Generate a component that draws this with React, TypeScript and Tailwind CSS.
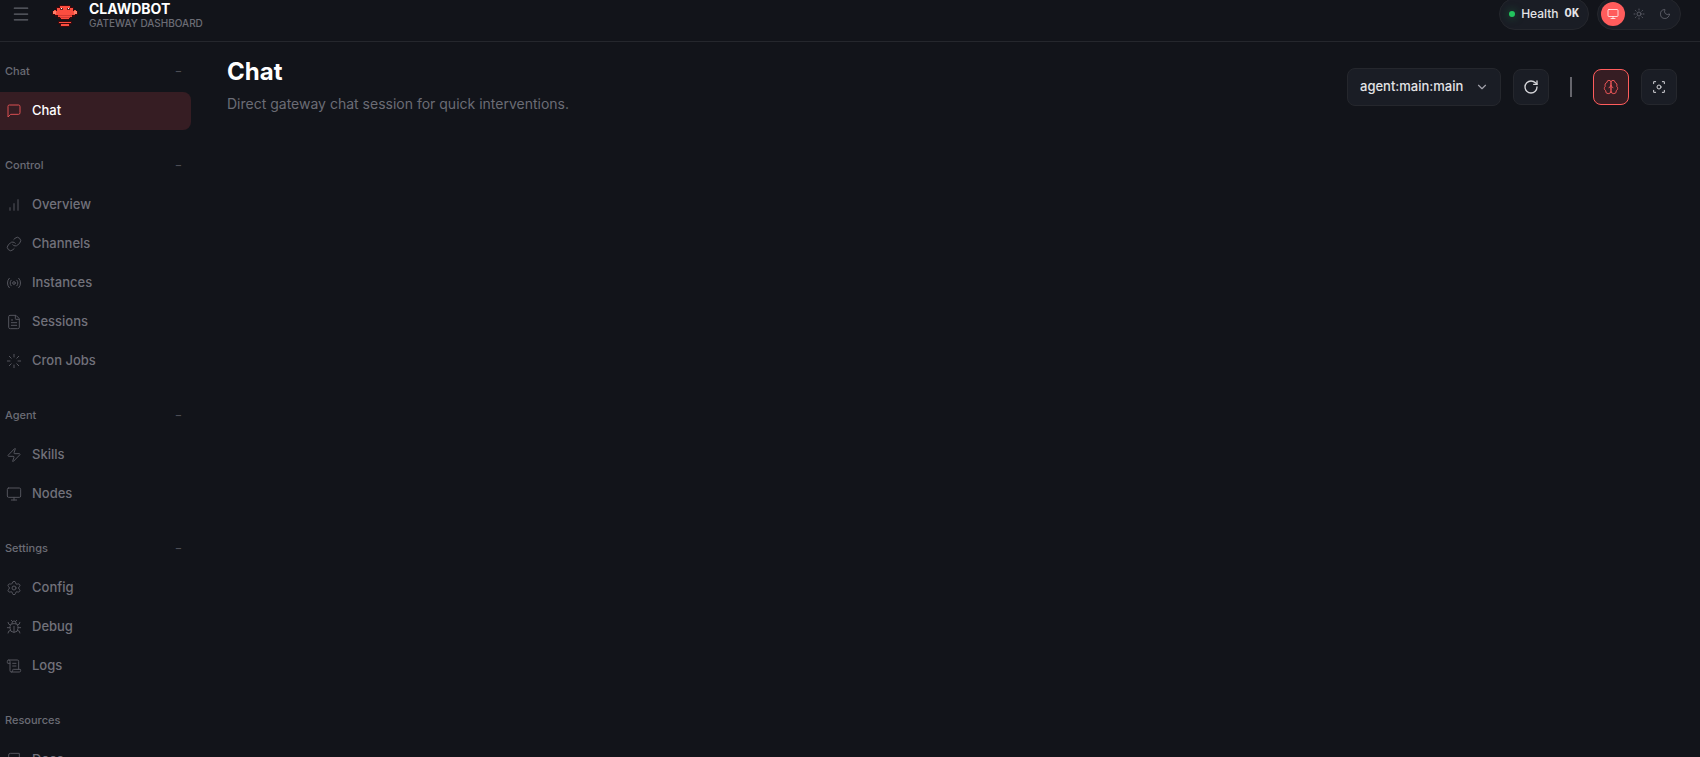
import React from 'react';
import {
	Bug,
	ChevronDown,
	FileText,
	Link,
	Loader,
	Menu,
	Monitor,
	Moon,
	Radio,
	RotateCw,
	ScrollText,
	Settings,
	Sun,
	Zap,
} from 'lucide-react';

const Icon = ({
	className,
	children,
}: {
	className?: string;
	children: React.ReactNode;
}) => (
	<svg
		className={className}
		viewBox="0 0 24 24"
		fill="none"
		stroke="currentColor"
		strokeWidth="1.5"
		strokeLinecap="round"
		strokeLinejoin="round"
	>
		{children}
	</svg>
);

const ChatIcon = ({ className }: { className?: string }) => (
	<Icon className={className}>
		<path d="M21 15a2 2 0 0 1-2 2H7l-4 4V5a2 2 0 0 1 2-2h14a2 2 0 0 1 2 2z" />
	</Icon>
);

const ChartIcon = ({ className }: { className?: string }) => (
	<Icon className={className}>
		<path d="M12 20V10" />
		<path d="M18 20V4" />
		<path d="M6 20v-4" />
	</Icon>
);

const BookIcon = ({ className }: { className?: string }) => (
	<Icon className={className}>
		<path d="M4 19.5v-15A2.5 2.5 0 0 1 6.5 2H20v20H6.5a2.5 2.5 0 0 1 0-5H20" />
	</Icon>
);

const BrainIcon = ({ className }: { className?: string }) => (
	<Icon className={className}>
		<path d="M12 5a3 3 0 1 0-5.997.125 4 4 0 0 0-2.526 5.77 4 4 0 0 0 .556 6.588A4 4 0 1 0 12 18Z" />
		<path d="M12 5a3 3 0 1 1 5.997.125 4 4 0 0 1 2.526 5.77 4 4 0 0 1-.556 6.588A4 4 0 1 1 12 18Z" />
		<path d="M15 13a4.5 4.5 0 0 1-3-4 4.5 4.5 0 0 1-3 4" />
	</Icon>
);

const FocusIcon = ({ className }: { className?: string }) => (
	<Icon className={className}>
		<path d="M4 7V4h3" />
		<path d="M20 7V4h-3" />
		<path d="M4 17v3h3" />
		<path d="M20 17v3h-3" />
		<circle cx="12" cy="12" r="3" />
	</Icon>
);

const Logo = () => (
	<svg className="h-7 w-7" viewBox="0 0 28 28" shapeRendering="crispEdges">
		<path
			fill="#3a0a0d"
			d="M8 5h12v2h3v3h2v1h2v4h-3v2h-3v2h-3v1h-8v-1H7v-2H4v-2H1v-4h2v-1h2V7h3zM7 21h14v3h-2v3H9v-3H7z"
		/>
		<path
			fill="#fb4d3f"
			d="M9 6h10v2h3v3h1v-1h2v1h1v3h-2v1h-3v2h-3v2h-8v-2H7v-2H4v-1H2v-3h1v-1h2v1h1V8h3zM8 22h12v1H8zM10 24h8v2h-8z"
		/>
		<path fill="#ff8069" d="M2 11h3v3H2zM23 11h3v3h-3z" />
		<path fill="#d53a33" d="M7 15h14v1H7zM9 17h10v1H9z" />
		<path fill="#6b2422" d="M9 8h3v2H9zM16 8h3v2h-3z" />
		<path fill="#ffffff" d="M10 8h1v1h-1zM17 8h1v1h-1z" />
	</svg>
);

const groups = [
	{ label: 'Chat', items: [{ name: 'Chat', icon: ChatIcon, active: true }] },
	{
		label: 'Control',
		items: [
			{ name: 'Overview', icon: ChartIcon },
			{ name: 'Channels', icon: Link },
			{ name: 'Instances', icon: Radio },
			{ name: 'Sessions', icon: FileText },
			{ name: 'Cron Jobs', icon: Loader },
		],
	},
	{
		label: 'Agent',
		items: [
			{ name: 'Skills', icon: Zap },
			{ name: 'Nodes', icon: Monitor },
		],
	},
	{
		label: 'Settings',
		items: [
			{ name: 'Config', icon: Settings },
			{ name: 'Debug', icon: Bug },
			{ name: 'Logs', icon: ScrollText },
		],
	},
	{
		label: 'Resources',
		fixed: true,
		items: [{ name: 'Docs', icon: BookIcon }],
	},
] as {
	label: string;
	fixed?: boolean;
	items: {
		name: string;
		active?: boolean;
		icon: React.ComponentType<{ className?: string; strokeWidth?: number }>;
	}[];
}[];

const Header = () => (
	<header className="-mt-3.5 flex h-14 shrink-0 items-center justify-between border-b border-[#25272d] pr-[19px] pl-[11px]">
		<div className="flex items-center">
			<button aria-label="Toggle menu" className="text-[#63656d]">
				<Menu className="h-5 w-5" strokeWidth={1.5} />
			</button>
			<div className="ml-5 flex items-center gap-2.5">
				<Logo />
				<div className="pt-0.5">
					<div className="text-sm leading-4 font-bold text-white">CLAWDBOT</div>
					<div className="text-[10px] leading-3 font-medium text-[#6b6c75]">
						GATEWAY DASHBOARD
					</div>
				</div>
			</div>
		</div>

		<div className="flex items-center gap-2">
			<div className="flex h-8 items-center gap-1.5 rounded-full border border-[#25272d] bg-[#1a1d25] px-[9px] text-xs font-medium text-[#e4e4e7]">
				<span className="h-1.5 w-1.5 rounded-full bg-[#22c55e] shadow-[0_0_8px_rgba(34,197,94,0.5)]" />
				<span>Health</span>
				<span className="font-['Liberation_Mono',monospace] font-bold">OK</span>
			</div>
			<div className="flex h-8 items-center gap-0.5 rounded-full border border-[#25272d] bg-[#1a1d25] px-[3px]">
				<button
					aria-label="System theme"
					className="flex h-6 w-6 items-center justify-center rounded-full bg-[#ff5c5c] text-white"
				>
					<Monitor className="h-3 w-3" strokeWidth={1.5} />
				</button>
				<button
					aria-label="Light theme"
					className="flex h-6 w-6 items-center justify-center rounded-full text-[#6b6c75]"
				>
					<Sun className="h-3 w-3" strokeWidth={1.5} />
				</button>
				<button
					aria-label="Dark theme"
					className="flex h-6 w-6 items-center justify-center rounded-full text-[#6b6c75]"
				>
					<Moon className="h-3 w-3" strokeWidth={1.5} />
				</button>
			</div>
		</div>
	</header>
);

const Sidebar = () => (
	<nav className="-ml-[7px] flex w-[198px] shrink-0 flex-col gap-5 pt-3.5">
		{groups.map((group) => (
			<div key={group.label}>
				<button className="mb-1.5 flex h-[30px] w-full items-center justify-between pr-[9px] pl-3 text-[11px] font-medium text-[#6b6c75]">
					<span>{group.label}</span>
					{!group.fixed && <span className="text-[#4d4e56]">−</span>}
				</button>
				<div className="flex flex-col gap-px">
					{group.items.map(({ name, icon: ItemIcon, active }) => (
						<a
							key={name}
							href="#"
							className={
								active
									? 'flex h-[38px] items-center gap-2.5 rounded-lg bg-[#361d23] px-[13px] text-[13px] font-medium text-white'
									: 'flex h-[38px] items-center gap-2.5 rounded-lg px-[13px] text-[13px] font-medium text-[#71717a]'
							}
						>
							<ItemIcon
								className={
									active ? 'h-4 w-4 text-[#db5052]' : 'h-4 w-4 text-[#54555d]'
								}
								strokeWidth={1.5}
							/>
							{name}
						</a>
					))}
				</div>
			</div>
		))}
	</nav>
);

const App = () => {
	return (
		<div className="flex h-screen flex-col overflow-hidden bg-[#12141a] font-['Inter',sans-serif]">
			<Header />
			<div className="flex">
				<Sidebar />
				<main className="flex flex-1 items-start justify-between pt-3.5 pr-[23px] pl-9">
					<div>
						<h1 className="text-2xl leading-8 font-bold text-white">Chat</h1>
						<p className="text-sm leading-8 text-[#6b6c75]">
							Direct gateway chat session for quick interventions.
						</p>
					</div>

					<div className="flex items-center gap-3 pt-3">
						<div className="relative">
							<select
								aria-label="Session"
								className="h-[38px] w-[154px] appearance-none rounded-lg border border-[#25272d] bg-[#1a1d25] pl-3 text-[13px] font-medium text-[#e4e4e7]"
							>
								<option>agent:main:main</option>
							</select>
							<ChevronDown
								className="pointer-events-none absolute top-3 right-3 h-3.5 w-3.5 text-[#a1a1aa]"
								strokeWidth={2}
							/>
						</div>
						<button
							aria-label="Refresh"
							className="flex h-9 w-9 items-center justify-center rounded-lg border border-[#25272d] bg-[#1a1d25] text-[#d4d4d8]"
						>
							<RotateCw className="h-4 w-4" strokeWidth={2} />
						</button>
						<span className="mx-[9px] h-5 w-0.5 bg-[#66666d]" />
						<button
							aria-label="Toggle thinking"
							className="flex h-9 w-9 items-center justify-center rounded-lg border border-[#ff5c5c] bg-[#361d23] text-[#e95557]"
						>
							<BrainIcon className="h-4 w-4" />
						</button>
						<button
							aria-label="Focus mode"
							className="flex h-9 w-9 items-center justify-center rounded-lg border border-[#25272d] bg-[#1a1d25] text-[#d4d4d8]"
						>
							<FocusIcon className="h-4 w-4" />
						</button>
					</div>
				</main>
			</div>
		</div>
	);
};

export default App;
